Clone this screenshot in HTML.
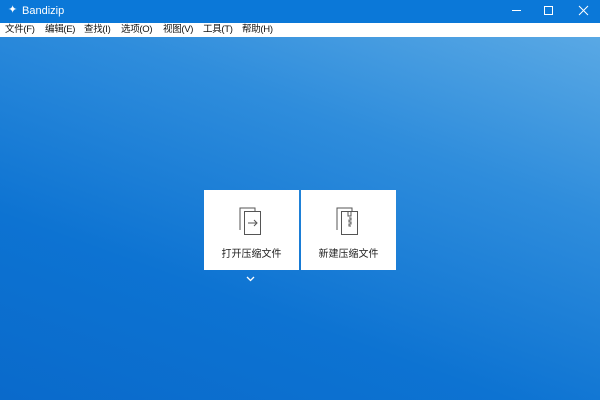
<!DOCTYPE html>
<html><head><meta charset="utf-8"><style>
*{margin:0;padding:0;box-sizing:border-box}
body{width:600px;height:400px;overflow:hidden;font-family:"Liberation Sans","Noto Sans CJK SC",sans-serif;position:relative;
background:linear-gradient(200deg,#62aee6 0%,#2f8ddc 35%,#0d73d2 70%,#0a6acb 100%);}
.title{position:absolute;left:0;top:0;width:600px;height:23px;background:#0b78d8;color:#fff;font-size:11px}
.title .t{position:absolute;left:22px;top:5px}
.title .i{position:absolute;left:8px;top:3px;font-size:11px}
.menu{position:absolute;left:0;top:23px;width:600px;height:14px;background:#fff;font-size:9.5px;color:#111;line-height:14px;letter-spacing:-0.3px}
.menu span{position:absolute;top:0}
.card{position:absolute;top:190px;width:95px;height:80px;background:#fff;font-size:10px;color:#222;text-align:center}
.card .l{position:absolute;top:55px;width:100%}
.card svg{position:absolute;left:35px;top:17px}
</style></head><body>
<div class="title"><span class="i">✦</span><span class="t">Bandizip</span>
<svg style="position:absolute;left:480px;top:0" width="120" height="23">
<line x1="32" y1="10.5" x2="41" y2="10.5" stroke="#fff"/>
<rect x="64.5" y="6.5" width="8" height="8" fill="none" stroke="#fff"/>
<path d="M99 6L108 15M108 6L99 15" stroke="#fff"/>
</svg></div>
<div class="menu">
<span style="left:5px">文件(F)</span><span style="left:45px">编辑(E)</span><span style="left:84px">查找(I)</span><span style="left:121px">选项(O)</span><span style="left:163px">视图(V)</span><span style="left:203px">工具(T)</span><span style="left:242px">帮助(H)</span>
</div>
<div class="card" style="left:204px">
<svg width="26" height="30" viewBox="0 0 26 30"><path d="M1 23V1H16V4" fill="none" stroke="#555"/><rect x="5.5" y="4.5" width="16" height="23" fill="#fff" stroke="#555"/><path d="M9 16H18M15 13L18 16L15 19" fill="none" stroke="#555"/></svg>
<div class="l">打开压缩文件</div></div>
<div class="card" style="left:301px">
<svg width="26" height="30" viewBox="0 0 26 30"><path d="M1 23V1H16V4" fill="none" stroke="#555"/><rect x="5.5" y="4.5" width="16" height="23" fill="#fff" stroke="#555"/><path d="M12 5V9H15V5M13 11H15V13H13V15H15V17H13V19H15" fill="none" stroke="#555"/></svg>
<div class="l">新建压缩文件</div></div>
<svg style="position:absolute;left:246px;top:276px" width="9" height="6"><path d="M1 1L4.5 4.5L8 1" fill="none" stroke="#fff" stroke-width="1.3"/></svg>
</body></html>
